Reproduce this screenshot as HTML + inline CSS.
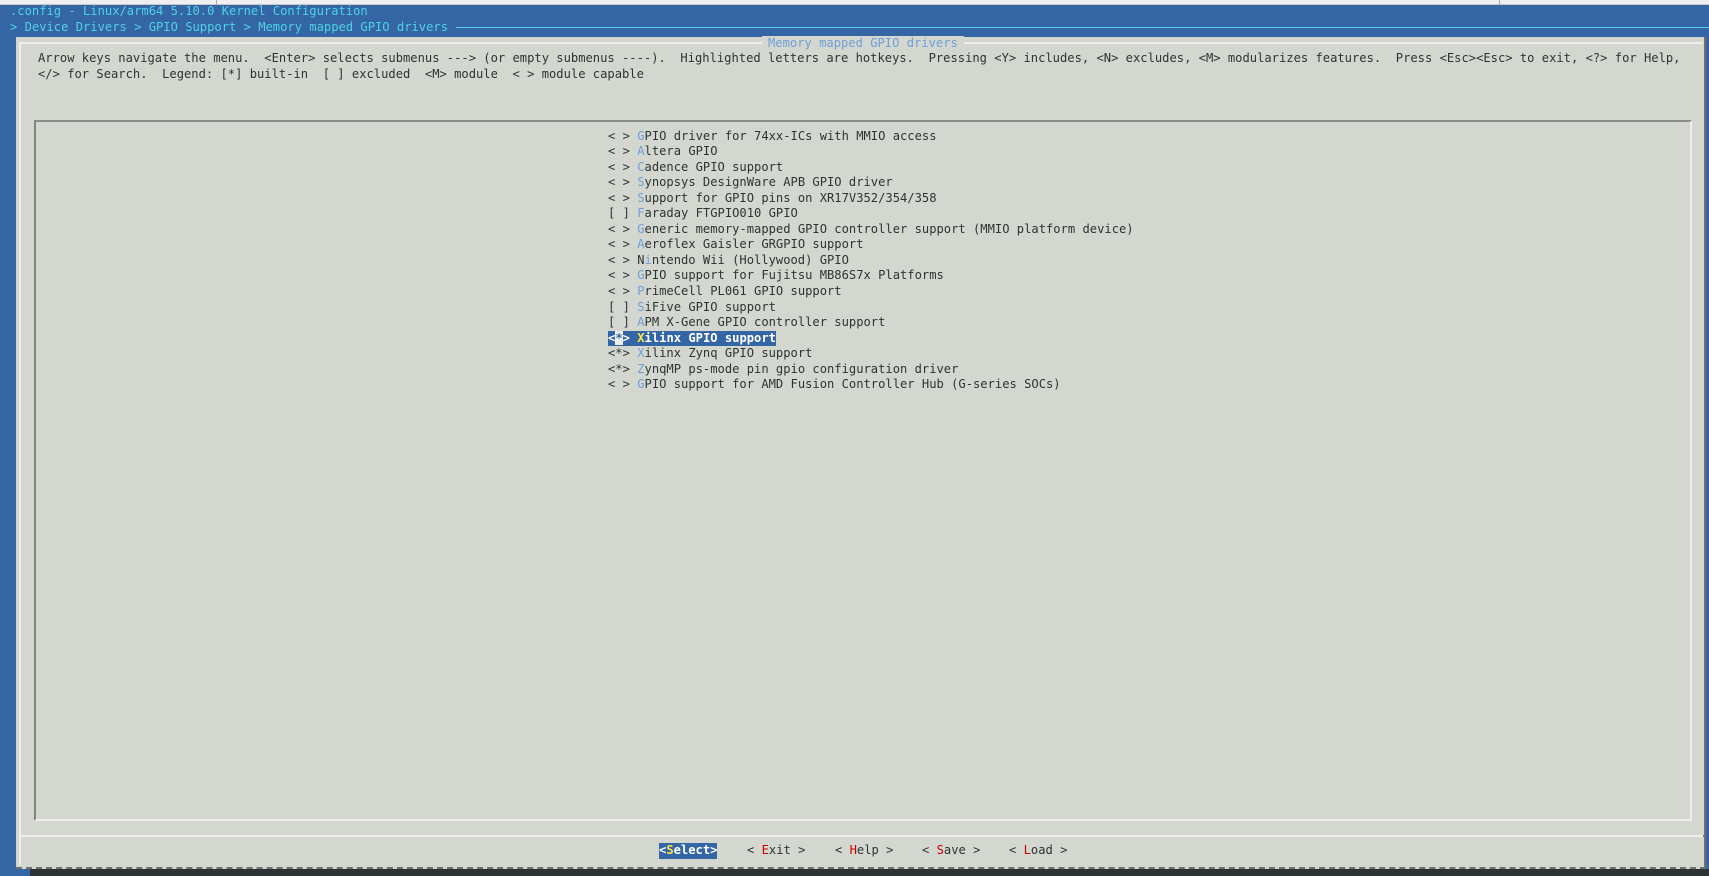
<!DOCTYPE html>
<html><head><meta charset="utf-8"><style>
*{margin:0;padding:0;box-sizing:border-box}
body{width:1709px;height:876px;overflow:hidden;background:#3465a4;position:relative;font-family:"DejaVu Sans Mono","Liberation Mono",monospace;font-size:12.13px;color:#2e3436}
.t{position:absolute;white-space:pre;line-height:15.55px;height:15.55px}
.c{color:#4fd3e3}
.h{color:#6f9fd8}
.r{color:#cc0000}
</style></head><body>
<div style="position:absolute;left:0;top:0;width:1709px;height:5px;background:#efefef;border-bottom:1px solid #c8c8c8"></div>
<div style="position:absolute;left:216px;top:0;width:1px;height:5px;background:#aaa"></div>
<div style="position:absolute;left:1499px;top:0;width:1px;height:5px;background:#aaa"></div>
<div class="t c" style="left:10px;top:4px">.config - Linux/arm64 5.10.0 Kernel Configuration</div>
<div class="t c" style="left:10px;top:19.5px">&gt; Device Drivers &gt; GPIO Support &gt; Memory mapped GPIO drivers</div>
<div style="position:absolute;left:456px;top:27px;width:1253px;height:1px;background:#4fd3e3"></div>
<div style="position:absolute;left:16px;top:37px;width:1690px;height:832px;background:#d3d7cf;border-right:2px solid #6e706b;border-bottom:2px dashed #6e706b"></div>
<div style="position:absolute;left:16px;top:869px;width:1693px;height:7px;background:#2e3436"></div>
<div style="position:absolute;left:0;top:869px;width:30px;height:7px;background:#3465a4"></div>
<div style="position:absolute;left:19px;top:42px;width:1684px;height:823px;border-top:2px solid #eeeeec;border-left:2px solid #eeeeec"></div>
<div class="t h" style="left:762px;top:35.5px;background:#d3d7cf;padding:0 6px">Memory mapped GPIO drivers</div>
<div class="t" style="left:38px;top:51px">Arrow keys navigate the menu.  &lt;Enter&gt; selects submenus ---&gt; (or empty submenus ----).  Highlighted letters are hotkeys.  Pressing &lt;Y&gt; includes, &lt;N&gt; excludes, &lt;M&gt; modularizes features.  Press &lt;Esc&gt;&lt;Esc&gt; to exit, &lt;?&gt; for Help,</div>
<div class="t" style="left:38px;top:66.5px">&lt;/&gt; for Search.  Legend: [*] built-in  [ ] excluded  &lt;M&gt; module  &lt; &gt; module capable</div>
<div style="position:absolute;left:34px;top:120px;width:1658px;height:701px;border-top:2px solid #8a8c87;border-left:2px solid #80827d;border-right:2px solid #eeeeec;border-bottom:2px solid #eeeeec"></div>
<div style="position:absolute;left:608px;top:128.5px">
<div class="t" style="position:relative">&lt; &gt; <span class="h">G</span>PIO driver for 74xx-ICs with MMIO access</div>
<div class="t" style="position:relative">&lt; &gt; <span class="h">A</span>ltera GPIO</div>
<div class="t" style="position:relative">&lt; &gt; <span class="h">C</span>adence GPIO support</div>
<div class="t" style="position:relative">&lt; &gt; <span class="h">S</span>ynopsys DesignWare APB GPIO driver</div>
<div class="t" style="position:relative">&lt; &gt; <span class="h">S</span>upport for GPIO pins on XR17V352/354/358</div>
<div class="t" style="position:relative">[ ] <span class="h">F</span>araday FTGPIO010 GPIO</div>
<div class="t" style="position:relative">&lt; &gt; <span class="h">G</span>eneric memory-mapped GPIO controller support (MMIO platform device)</div>
<div class="t" style="position:relative">&lt; &gt; <span class="h">A</span>eroflex Gaisler GRGPIO support</div>
<div class="t" style="position:relative">&lt; &gt; N<span class="h">i</span>ntendo Wii (Hollywood) GPIO</div>
<div class="t" style="position:relative">&lt; &gt; <span class="h">G</span>PIO support for Fujitsu MB86S7x Platforms</div>
<div class="t" style="position:relative">&lt; &gt; <span class="h">P</span>rimeCell PL061 GPIO support</div>
<div class="t" style="position:relative">[ ] <span class="h">S</span>iFive GPIO support</div>
<div class="t" style="position:relative">[ ] <span class="h">A</span>PM X-Gene GPIO controller support</div>
<div class="t" style="position:relative;display:inline-block;background:#3465a4;color:#fff;font-weight:bold">&lt;<span style="background:#eeeeec;color:#3465a4">*</span>&gt; <span style="color:#fce94f">X</span>ilinx GPIO support</div>
<div class="t" style="position:relative">&lt;*&gt; <span class="h">X</span>ilinx Zynq GPIO support</div>
<div class="t" style="position:relative">&lt;*&gt; <span class="h">Z</span>ynqMP ps-mode pin gpio configuration driver</div>
<div class="t" style="position:relative">&lt; &gt; <span class="h">G</span>PIO support for AMD Fusion Controller Hub (G-series SOCs)</div>
</div>
<div style="position:absolute;left:21px;top:835px;width:1682px;height:2px;background:#eeeeec"></div>
<div style="position:absolute;left:1703px;top:835px;width:3px;height:2px;background:#6e706b"></div>
<div class="t" style="left:659px;top:843px;background:#3465a4;color:#fff;font-weight:bold">&lt;<span style="color:#fce94f">S</span>elect&gt;</div>
<div class="t" style="left:747px;top:843px">&lt; <span class="r">E</span>xit &gt;</div>
<div class="t" style="left:835px;top:843px">&lt; <span class="r">H</span>elp &gt;</div>
<div class="t" style="left:922px;top:843px">&lt; <span class="r">S</span>ave &gt;</div>
<div class="t" style="left:1009px;top:843px">&lt; <span class="r">L</span>oad &gt;</div>
</body></html>
